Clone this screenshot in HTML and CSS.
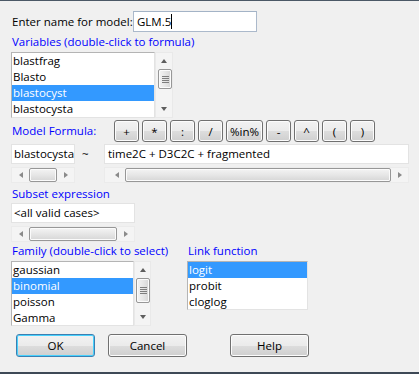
FILE: index.html
```html
<!DOCTYPE html>
<html lang="en">
<head>
    <meta charset="UTF-8">
    <title>GLM model dialog</title>
    <link rel="stylesheet" href="styles.css">
</head>
<body>
<div class="dialog">

    <div class="name-row">
        <span class="lbl name-lbl">Enter name for model:</span>
        <div class="entry name-entry">GLM.5<span class="caret"></span></div>
    </div>

    <div class="title">Variables (double-click to formula)</div>
    <div class="listbox">
        <ul class="items vars">
            <li>blastfrag</li>
            <li>Blasto</li>
            <li class="sel">blastocyst</li>
            <li>blastocysta</li>
        </ul>
        <div class="vscroll vars-sb">
            <div class="arrow"><span class="tri up"></span></div>
            <div class="track"><div class="vthumb"><i></i><i></i><i></i><i></i></div></div>
            <div class="arrow"><span class="tri down"></span></div>
        </div>
    </div>

    <div class="formula-row">
        <span class="title formula-lbl">Model Formula:</span>
        <div class="ops">
            <button class="btn op">+</button>
            <button class="btn op">*</button>
            <button class="btn op">:</button>
            <button class="btn op">/</button>
            <button class="btn op wide">%in%</button>
            <button class="btn op">-</button>
            <button class="btn op">^</button>
            <button class="btn op">(</button>
            <button class="btn op">)</button>
        </div>
    </div>

    <div class="entry-row">
        <div class="entry lhs">blastocysta</div>
        <span class="tilde">~</span>
        <div class="entry rhs">time2C + D3C2C + fragmented</div>
    </div>
    <div class="entry-row scroll-row">
        <div class="hscroll lhs">
            <div class="arrow"><span class="tri left"></span></div>
            <div class="hthumb"></div>
            <div class="arrow"><span class="tri right"></span></div>
        </div>
        <span class="tilde"></span>
        <div class="hscroll rhs">
            <div class="arrow"><span class="tri left"></span></div>
            <div class="hthumb"></div>
            <div class="arrow"><span class="tri right"></span></div>
        </div>
    </div>

    <div class="title subset-lbl">Subset expression</div>
    <div class="entry subset">&lt;all valid cases&gt;</div>
    <div class="hscroll subset-sb">
        <div class="arrow"><span class="tri left"></span></div>
        <div class="hthumb"></div>
        <div class="arrow"><span class="tri right"></span></div>
    </div>

    <div class="family-row">
        <div class="family-col">
            <div class="title">Family (double-click to select)</div>
            <div class="listbox family-box">
                <ul class="items family">
                    <li>gaussian</li>
                    <li class="sel">binomial</li>
                    <li>poisson</li>
                    <li>Gamma</li>
                </ul>
                <div class="vscroll family-sb">
                    <div class="arrow"><span class="tri up"></span></div>
                    <div class="track"><div class="vthumb"><i></i><i></i><i></i><i></i></div></div>
                    <div class="arrow"><span class="tri down"></span></div>
                </div>
            </div>
        </div>
        <div class="link-col">
            <div class="title">Link function</div>
            <ul class="items link">
                <li class="sel">logit</li>
                <li>probit</li>
                <li>cloglog</li>
            </ul>
        </div>
    </div>

    <div class="button-row">
        <button class="btn big default">OK</button>
        <button class="btn big cancel">Cancel</button>
        <button class="btn big help">Help</button>
    </div>

</div>
</body>
</html>
```

FILE: styles.css
```css
body {
    margin: 0;
    background-color: #f0f0f0;
    font-family: "Open Sans", "Liberation Sans", sans-serif;
    font-size: 11.5px;
    color: #000;
}

.dialog {
    box-sizing: border-box;
    height: 374px;
    padding-left: 11px;
    border-top: 1px solid #4b5866;
    border-bottom: 2px solid #3e4956;
    white-space: nowrap;
}

/* name row */
.name-row {
    display: flex;
    align-items: center;
    height: 21px;
    margin-top: 10px;
}

.name-lbl {
    width: 121px;
    padding-left: 1px;
}

.entry {
    box-sizing: border-box;
    height: 20px;
    line-height: 18px;
    padding-left: 2px;
    background: #fff;
    border: 1px solid #e3e3e3;
    overflow: hidden;
}

.name-entry {
    width: 124px;
    height: 21px;
    line-height: 19px;
    padding-left: 3px;
    border: 1px solid #abb9cb;
    border-top-color: #a3b3c6;
}

.caret {
    display: inline-block;
    width: 1px;
    height: 15px;
    background: #000;
    vertical-align: -3px;
}

.title {
    color: #0000ff;
    height: 16px;
    line-height: 16px;
    padding-left: 1px;
    margin-top: 2px;
}

/* list boxes */
.listbox {
    display: flex;
    margin-top: 2px;
}

.items {
    list-style: none;
    margin: 0;
    padding: 0;
    box-sizing: border-box;
    background: #fff;
    border: 1px solid #b4b4b4;
    border-right-color: #e3e3e3;
    border-bottom-color: #e3e3e3;
    overflow: hidden;
}

.items li {
    height: 16px;
    line-height: 16px;
    padding-left: 1px;
}

.items li.sel {
    background: #3399ff;
    color: #fff;
}

.vars {
    width: 144px;
    height: 66px;
}

.family {
    width: 123px;
    height: 65px;
}

.link {
    width: 121px;
    height: 49px;
    margin-top: 2px;
}

/* scrollbars */
.vscroll {
    box-sizing: border-box;
    display: flex;
    flex-direction: column;
    background: #f4f4f4;
    border: 1px solid #e9e9e9;
}

.vars-sb {
    width: 18px;
    height: 66px;
}

.family-sb {
    width: 17px;
    height: 65px;
}

.vscroll .arrow {
    height: 16px;
    display: flex;
    align-items: center;
    justify-content: center;
}

.vscroll .track {
    flex: 1;
}

.vthumb {
    box-sizing: border-box;
    border: 1px solid #979797;
    border-radius: 2px;
    background: linear-gradient(to right, #f4f4f4, #e6e6e6 50%, #d6d6d6);
    box-shadow: inset 0 0 0 1px #fbfbfb;
    display: flex;
    flex-direction: column;
    justify-content: center;
    align-items: center;
    gap: 1px;
}

.vthumb i {
    display: block;
    width: 7px;
    height: 1px;
    background: #7d7d7d;
}

.vars-sb .vthumb {
    height: 20px;
    margin-left: 2px;
}

.family-sb .vthumb {
    height: 25px;
    margin-left: 1px;
}

.hscroll {
    box-sizing: border-box;
    display: flex;
    height: 16px;
    background: #f4f4f4;
    border: 1px solid #ebebeb;
}

.hscroll .arrow {
    width: 17px;
    display: flex;
    align-items: center;
    justify-content: center;
}

.hthumb {
    flex: 1;
    box-sizing: border-box;
    border: 1px solid #979797;
    border-radius: 2px;
    background: linear-gradient(#f4f4f4, #e6e6e6 50%, #d6d6d6);
    box-shadow: inset 0 0 0 1px #fbfbfb;
}

.tri {
    display: block;
    width: 0;
    height: 0;
    border: 3px solid transparent;
}

.tri.up {
    border-top: 0;
    border-bottom: 4px solid #5e5e5e;
}

.tri.down {
    border-bottom: 0;
    border-top: 4px solid #5e5e5e;
}

.tri.left {
    border-left: 0;
    border-right: 4px solid #8a8a8a;
}

.tri.right {
    border-right: 0;
    border-left: 4px solid #8a8a8a;
}

/* formula */
.formula-row {
    display: flex;
    align-items: center;
    height: 22px;
    margin-top: 2px;
}

.formula-lbl {
    width: 102px;
    margin-top: 0;
}

.ops {
    display: flex;
    gap: 3px;
}

.btn {
    box-sizing: border-box;
    font-family: inherit;
    font-size: 11.5px;
    color: #000;
    padding: 0;
    border: 1px solid #707070;
    border-radius: 3px;
    background: linear-gradient(#f2f2f2, #ebebeb 50%, #dddddd 51%, #cfcfcf);
    box-shadow: inset 0 0 0 1px #fcfcfc;
}

.op {
    width: 25px;
    height: 22px;
}

.op.wide {
    width: 37px;
}

.entry-row {
    display: flex;
    margin-top: 2px;
}

.entry-row .lhs {
    width: 64px;
}

.entry-row .rhs {
    width: 305px;
    padding-left: 3px;
}

.tilde {
    width: 22px;
    padding-left: 7px;
    line-height: 20px;
}

.scroll-row {
    margin-top: 3px;
}

.subset-lbl {
    margin-top: 3px;
}

.subset {
    width: 124px;
    margin-top: 1px;
}

.subset-sb {
    width: 124px;
    margin-top: 3px;
}

/* family / link */
.family-row {
    display: flex;
    margin-top: 1px;
}

.family-row .title {
    margin-top: 0;
}

.family-col {
    width: 176px;
}

/* buttons */
.button-row {
    display: flex;
    margin-top: 8px;
}

.big {
    width: 79px;
    height: 23px;
}

.default {
    margin-left: 5px;
    border-color: #3c7fb1;
    box-shadow: inset 0 0 0 1px #48d1fd;
}

.cancel {
    margin-left: 13px;
}

.help {
    margin-left: 43px;
}
```
